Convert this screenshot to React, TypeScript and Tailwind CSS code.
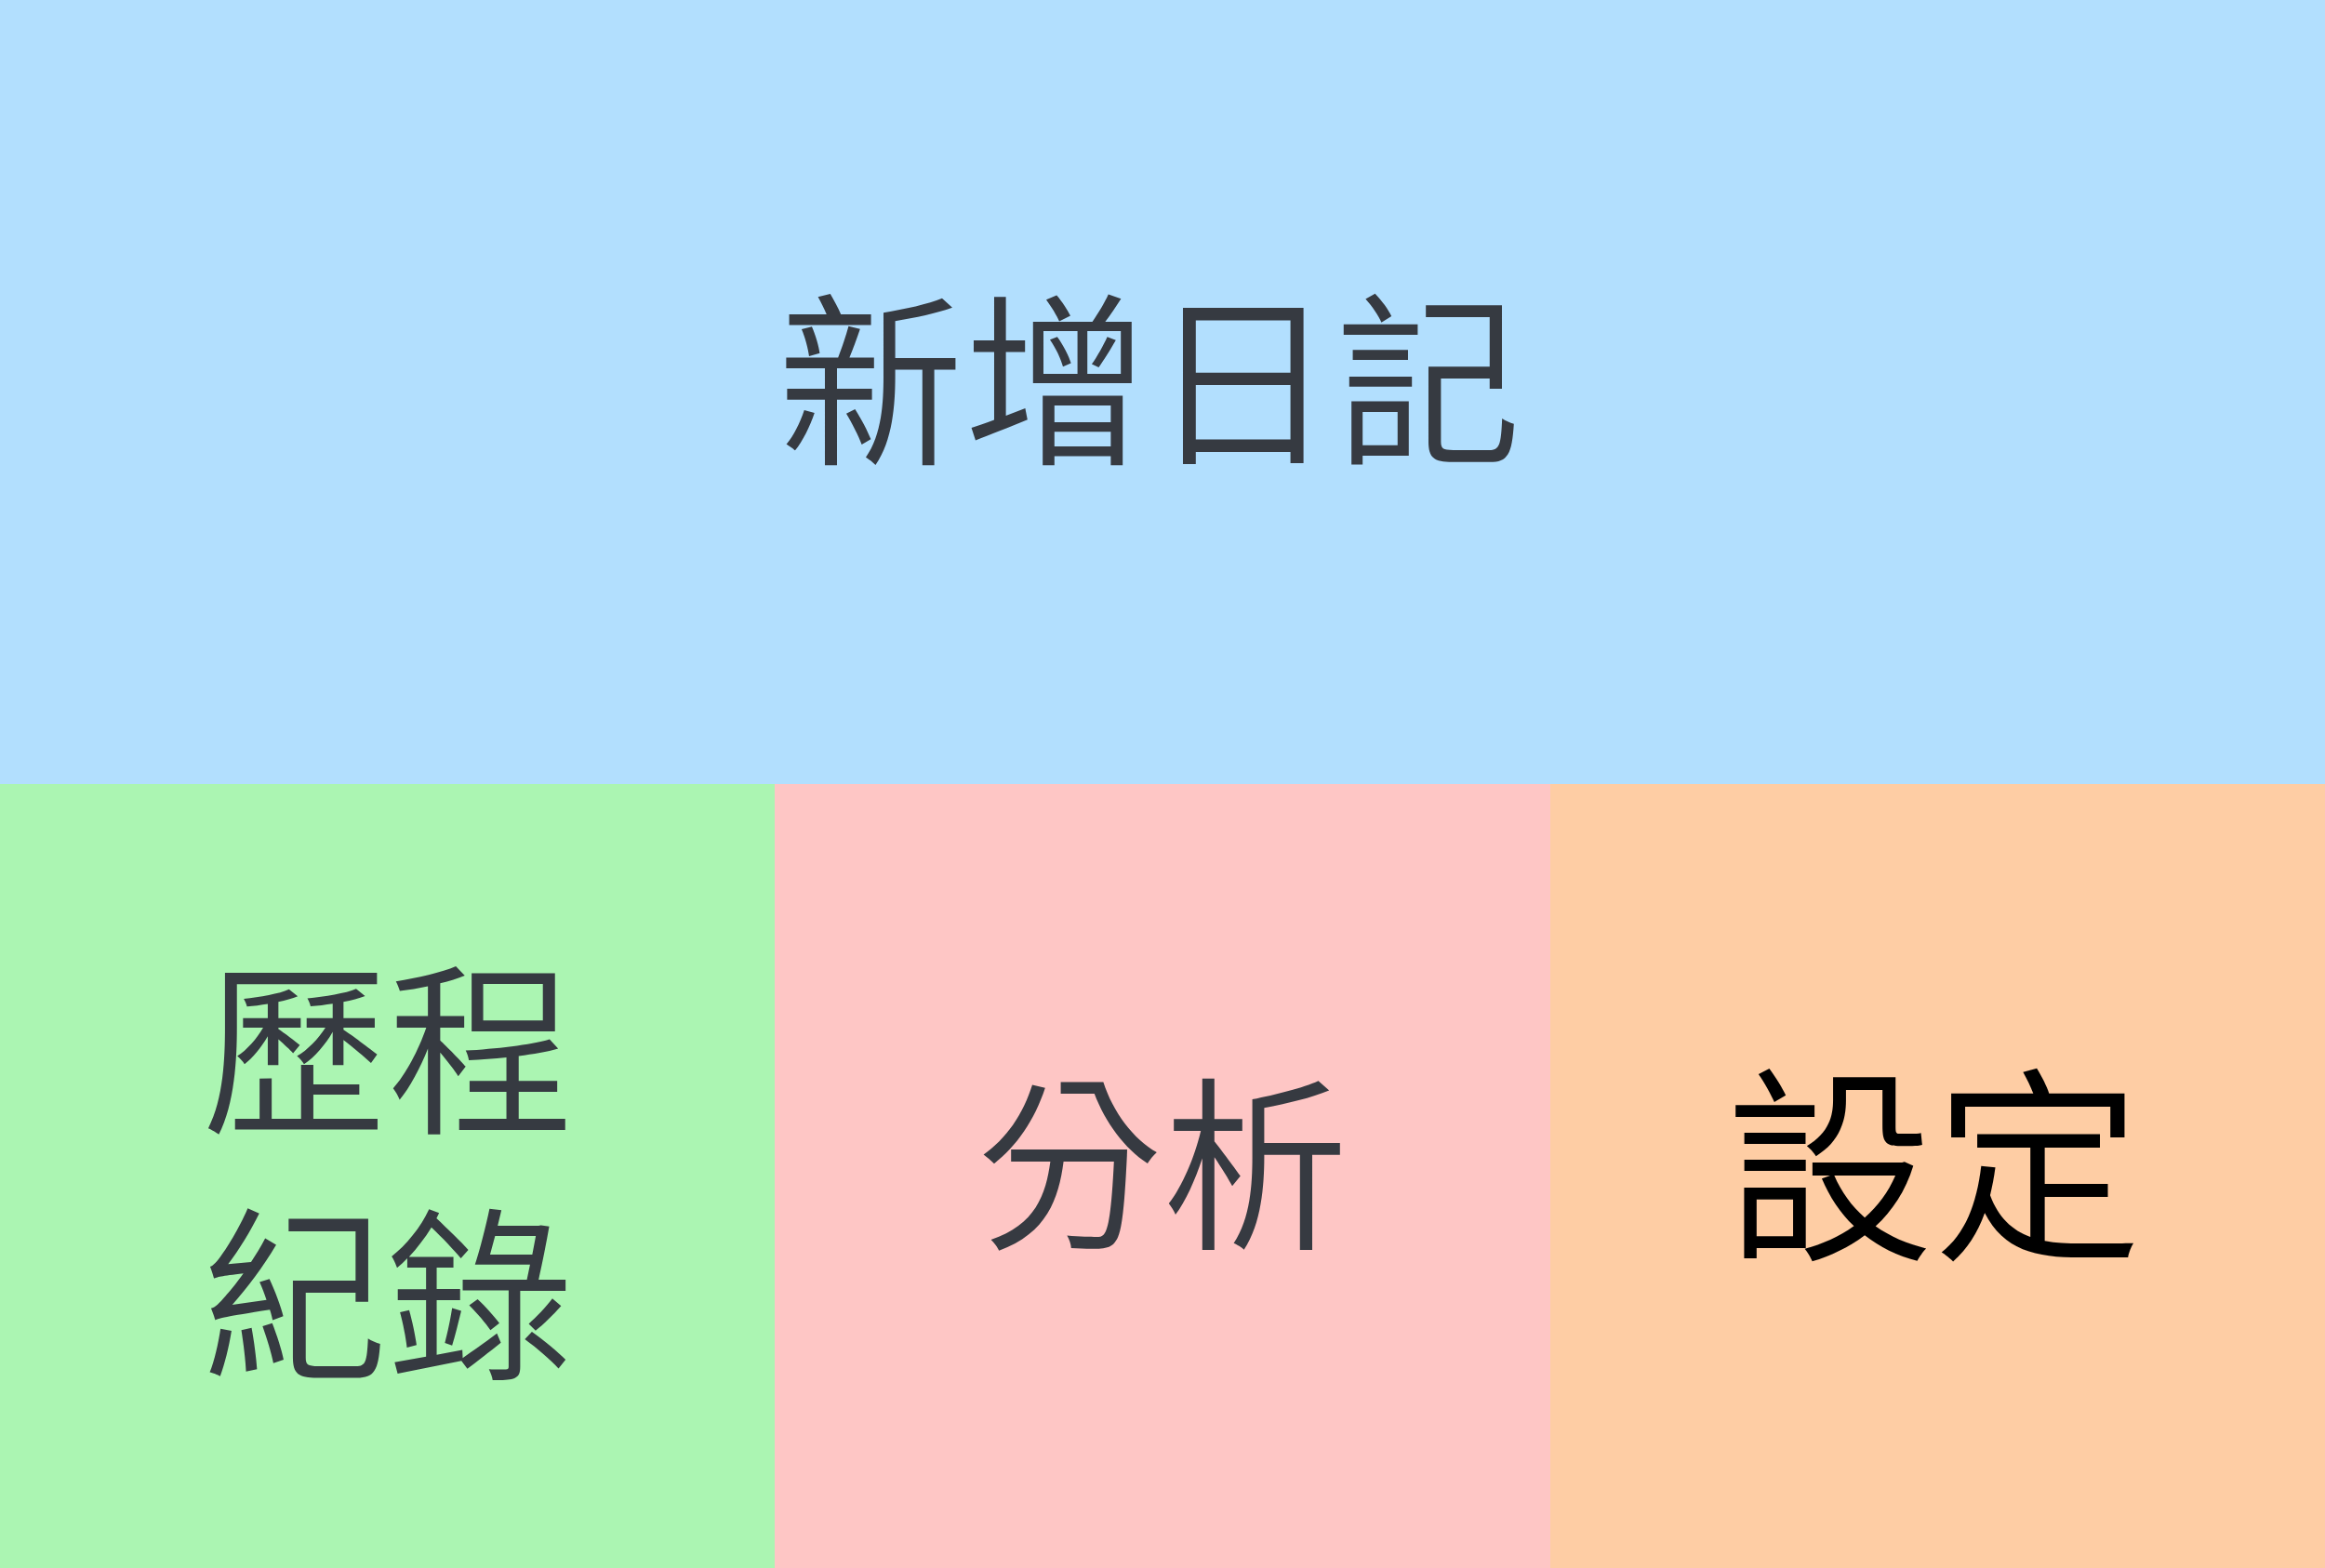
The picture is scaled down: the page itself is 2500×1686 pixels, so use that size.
export default function App() {
  return (
    <main className="grid min-h-screen grid-cols-3 grid-rows-2 font-['Noto_Sans_CJK_TC',sans-serif] text-[200px] leading-[264px] font-[350] text-[#363a41]">
      <button type="button" className="col-span-3 flex items-center justify-center bg-[#b2dffe] pr-7 pb-12">
        新增日記
      </button>
      <button type="button" className="flex flex-col items-center justify-center bg-[#abf5b2] pb-8">
        <span>歷程</span>
        <span>紀錄</span>
      </button>
      <button type="button" className="flex items-center justify-center bg-[#fec6c5] pb-12">
        分析
      </button>
      <button type="button" className="flex items-center justify-center bg-[#fecda4] pr-2 pb-12 text-[224px] text-black">
        設定
      </button>
    </main>
  );
}
